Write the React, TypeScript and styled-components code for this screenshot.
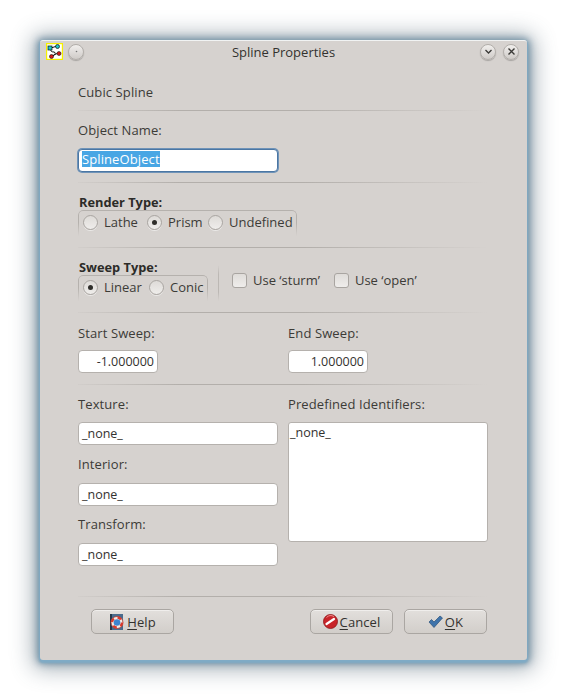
import styled, { createGlobalStyle } from "styled-components";

const GlobalStyle = createGlobalStyle`
    html, body {
        margin: 0;
        background: #fff;
    }
    body {
        font-family: "Open Sans", "Noto Sans", sans-serif;
        font-size: 13px;
        letter-spacing: 0.1px;
        color: #3c3b37;
    }
`;

const Page = styled.div`
    width: 566px;
    height: 700px;
    padding: 40px 0 0 40px;
    box-sizing: border-box;
    overflow: hidden;
`;

const Window = styled.div`
    width: 487px;
    height: 620px;
    box-sizing: border-box;
    background: #d6d2cf;
    border-top: 1px solid #f1f3f3;
    border-radius: 3px;
    box-shadow:
        0 2px 2px 1px #7fabc6,
        0 1px 7px 3px rgba(88, 125, 150, 0.72),
        0 2px 22px 7px rgba(70, 90, 105, 0.48);
`;

const TitleBar = styled.div`
    height: 21px;
    display: flex;
    align-items: center;
    padding: 0 8px 0 6px;
`;

const Title = styled.div`
    flex: 1;
    text-align: center;
    font-size: 13px;
    letter-spacing: 0;
    color: #33322f;
    padding-right: 6px;
`;

const TitleSide = styled.div<{ $w: number; $gap: number; $end?: boolean }>`
    width: ${(p) => p.$w}px;
    display: flex;
    align-items: center;
    justify-content: ${(p) => (p.$end ? "flex-end" : "flex-start")};
    gap: ${(p) => p.$gap}px;
`;

const RoundButton = styled.div`
    width: 16px;
    height: 16px;
    box-sizing: border-box;
    flex-shrink: 0;
    border-radius: 50%;
    background: linear-gradient(#f1efed, #cfcbc8);
    border: 1px solid #b2aeaa;
    box-shadow: 0 1px 1px rgba(0, 0, 0, 0.22);
    display: flex;
    align-items: center;
    justify-content: center;
`;

const Content = styled.div`
    padding: 20px 39px 0 38px;
`;

const Line = styled.div`
    height: 20px;
    line-height: 20px;
    white-space: nowrap;
`;

const Separator = styled.div<{ $top: number; $bottom: number }>`
    height: 1px;
    margin: ${(p) => p.$top}px 0 ${(p) => p.$bottom}px;
    background: linear-gradient(90deg, #d2cecb 0%, #b3afab 25%, #b3afab 55%, #d6d2cf 100%);
`;

const TextInput = styled.div<{ $w?: number; $focus?: boolean; $right?: boolean }>`
    width: ${(p) => p.$w ?? 200}px;
    height: 23px;
    line-height: 22px;
    box-sizing: border-box;
    background: #fff;
    border: 1px solid ${(p) => (p.$focus ? "#4b76a3" : "#b5b1ad")};
    box-shadow: ${(p) => (p.$focus ? "0 0 0 1px #6f93b8" : "none")};
    border-radius: 4px;
    padding: 0 3px;
    text-align: ${(p) => (p.$right ? "right" : "left")};
    color: #33322f;
    font-size: 12.5px;
    letter-spacing: 0;
`;

const Selected = styled.span`
    background: #48a6e4;
    color: #fff;
    display: inline-block;
    font-size: 13px;
    letter-spacing: 0.1px;
    line-height: 16px;
    vertical-align: 1px;
`;

const Bold = styled.div`
    height: 14px;
    line-height: 14px;
    font-weight: 700;
    font-size: 12.8px;
    letter-spacing: 0;
    color: #2c2b28;
    padding-left: 1px;
    white-space: nowrap;
`;

const Group = styled.div<{ $w: number }>`
    width: ${(p) => p.$w}px;
    height: 26px;
    margin-top: 1px;
    box-sizing: border-box;
    position: relative;
    display: flex;
    align-items: flex-start;
    padding: 4px 0 0 5px;
    /* the frame fades out towards the bottom, its content does not */
    &::before {
        content: "";
        position: absolute;
        inset: 0;
        border: 1px solid #b5b1ad;
        border-bottom: none;
        border-radius: 5px 5px 0 0;
        -webkit-mask-image: linear-gradient(#000 50%, transparent 100%);
        mask-image: linear-gradient(#000 50%, transparent 100%);
    }
`;

const Radio = styled.span<{ $on?: boolean }>`
    width: 15px;
    height: 15px;
    box-sizing: border-box;
    flex-shrink: 0;
    border-radius: 50%;
    background: linear-gradient(#dedbd8, #efedeb);
    border: 1px solid #a9a5a1;
    box-shadow: 0 1px 0 rgba(255, 255, 255, 0.5);
    display: flex;
    align-items: center;
    justify-content: center;
    &::after {
        content: "";
        width: 5px;
        height: 5px;
        border-radius: 50%;
        background: ${(p) => (p.$on ? "#2f2e2b" : "transparent")};
    }
`;

const RadioItem = styled.div<{ $w: number }>`
    width: ${(p) => p.$w}px;
    height: 16px;
    line-height: 16px;
    display: flex;
    align-items: center;
    gap: 6px;
    white-space: nowrap;
    flex-shrink: 0;
    letter-spacing: 0;
`;

const SweepRow = styled.div`
    display: flex;
`;

const SweepLeft = styled.div`
    width: 131px;
`;

const VerticalRule = styled.div`
    width: 1px;
    height: 36px;
    margin: 5px 0 0 9px;
    background: linear-gradient(#d6d2cf, #bcb8b4 25%, #bcb8b4 75%, #d6d2cf);
`;

const Checks = styled.div`
    display: flex;
    align-items: center;
    gap: 14px;
    padding-left: 13px;
    height: 40px;
    letter-spacing: 0;
`;

const CheckItem = styled.div`
    display: flex;
    align-items: center;
    gap: 6px;
    white-space: nowrap;
`;

const Checkbox = styled.span`
    width: 15px;
    height: 15px;
    box-sizing: border-box;
    border: 1px solid #a9a5a1;
    border-radius: 3px;
    background: linear-gradient(#dfdcd9, #efedeb);
`;

const TwoColumns = styled.div`
    display: grid;
    grid-template-columns: 210px 200px;
`;

const Column = styled.div`
    display: flex;
    flex-direction: column;
`;

const FieldGap = styled.div<{ $h: number }>`
    height: ${(p) => p.$h}px;
    flex-shrink: 0;
`;

const ListBox = styled.div`
    width: 200px;
    height: 120px;
    box-sizing: border-box;
    background: #fff;
    border: 1px solid #b5b1ad;
    border-radius: 3px;
    padding: 1px;
    line-height: 18px;
    font-size: 12.5px;
    letter-spacing: 0;
    color: #33322f;
`;

const ButtonRow = styled.div`
    display: flex;
    padding-left: 13px;
`;

const PushButton = styled.div<{ $w: number; $mr: number }>`
    width: ${(p) => p.$w}px;
    height: 25px;
    margin-right: ${(p) => p.$mr}px;
    box-sizing: border-box;
    border: 1px solid #aaa6a2;
    border-radius: 5px;
    background: linear-gradient(#e2dfdc, #d2ceca);
    box-shadow: inset 0 1px 0 #f0eeec;
    display: flex;
    align-items: center;
    justify-content: center;
    gap: 2px;
    color: #33322f;
    & u {
        text-underline-offset: 2px;
    }
`;

function AppIcon() {
    return (
        <svg width="17" height="17" viewBox="0 0 17 17">
            <rect x="0.5" y="0.5" width="16" height="16" fill="#fff" stroke="#f5f000" strokeWidth="1.4" />
            <path d="M5 5 L11 3 M5 6 Q4 9 8 9 Q11 10 7 13 M12 10 L6 13" fill="none" stroke="#111" strokeWidth="1" />
            <rect x="2" y="3" width="4" height="4" fill="#20c4c8" stroke="#111" strokeWidth="0.7" />
            <circle cx="11.5" cy="3.5" r="2" fill="#20c4c8" stroke="#111" strokeWidth="0.7" />
            <circle cx="13" cy="10.5" r="2" fill="#d21818" stroke="#111" strokeWidth="0.6" />
            <circle cx="5.5" cy="13.5" r="2" fill="#d21818" stroke="#111" strokeWidth="0.6" />
        </svg>
    );
}

function HelpIcon() {
    return (
        <svg width="16" height="16" viewBox="0 0 16 16">
            <rect x="1" y="0" width="13" height="16" fill="#4a6b8c" />
            <rect x="1" y="0" width="2" height="16" fill="#26384a" />
            <circle cx="8" cy="8.5" r="6" fill="#f4ede8" stroke="#b8392c" strokeWidth="0.8" />
            <circle cx="8" cy="8.5" r="5" fill="none" stroke="#d8392c" strokeWidth="2.4" strokeDasharray="3.9 3.95" />
            <circle cx="8" cy="8.5" r="3.3" fill="#3d84cf" />
        </svg>
    );
}

function CancelIcon() {
    return (
        <svg width="15" height="15" viewBox="0 0 15 15">
            <circle cx="7.5" cy="7.5" r="7" fill="#c8252a" stroke="#8e1518" strokeWidth="0.8" />
            <path d="M3.5 10 L11 5" stroke="#fff" strokeWidth="2.2" strokeLinecap="round" />
            <path d="M3.5 3.5 A6 6 0 0 1 11 2.6" fill="none" stroke="#ee8a8a" strokeWidth="1" />
        </svg>
    );
}

function OkIcon() {
    return (
        <svg width="15" height="14" viewBox="0 0 15 14">
            <path
                d="M1 7 L3.5 4.5 L6 7 L12 1 L14.5 3 L6 12.5 Z"
                fill="#3f74ab"
                stroke="#2b5078"
                strokeWidth="0.7"
                strokeLinejoin="round"
            />
        </svg>
    );
}

export default function App() {
    return (
        <Page>
            <GlobalStyle />
            <Window>
                <TitleBar>
                    <TitleSide $w={60} $gap={5}>
                        <AppIcon />
                        <RoundButton>
                            <svg width="3" height="3" viewBox="0 0 3 3">
                                <circle cx="1.5" cy="1.5" r="0.8" fill="#777" />
                            </svg>
                        </RoundButton>
                    </TitleSide>
                    <Title>Spline Properties</Title>
                    <TitleSide $w={52} $gap={7} $end>
                        <RoundButton>
                            <svg width="9" height="9" viewBox="0 0 9 9">
                                <path d="M1.5 3 L4.5 6 L7.5 3" fill="none" stroke="#3a3936" strokeWidth="1.3" />
                            </svg>
                        </RoundButton>
                        <RoundButton>
                            <svg width="9" height="9" viewBox="0 0 9 9">
                                <path d="M1.5 1.5 L7.5 7.5 M7.5 1.5 L1.5 7.5" stroke="#3a3936" strokeWidth="1.4" />
                            </svg>
                        </RoundButton>
                    </TitleSide>
                </TitleBar>
                <Content>
                    <Line>Cubic Spline</Line>
                    <Separator $top={8} $bottom={9} />
                    <Line>Object Name:</Line>
                    <FieldGap $h={9} />
                    <TextInput $focus>
                        <Selected>SplineObject</Selected>
                    </TextInput>
                    <Separator $top={10} $bottom={12} />
                    <Bold>Render Type:</Bold>
                    <Group $w={219}>
                        <RadioItem $w={64}>
                            <Radio />
                            Lathe
                        </RadioItem>
                        <RadioItem $w={61}>
                            <Radio $on />
                            Prism
                        </RadioItem>
                        <RadioItem $w={85}>
                            <Radio />
                            Undefined
                        </RadioItem>
                    </Group>
                    <Separator $top={11} $bottom={12} />
                    <SweepRow>
                        <SweepLeft>
                            <Bold>Sweep Type:</Bold>
                            <Group $w={130}>
                                <RadioItem $w={66}>
                                    <Radio $on />
                                    Linear
                                </RadioItem>
                                <RadioItem $w={56}>
                                    <Radio />
                                    Conic
                                </RadioItem>
                            </Group>
                        </SweepLeft>
                        <VerticalRule />
                        <Checks>
                            <CheckItem>
                                <Checkbox />
                                Use ‘sturm’
                            </CheckItem>
                            <CheckItem>
                                <Checkbox />
                                Use ‘open’
                            </CheckItem>
                        </Checks>
                    </SweepRow>
                    <Separator $top={11} $bottom={10} />
                    <TwoColumns>
                        <Column>
                            <Line>Start Sweep:</Line>
                            <FieldGap $h={7} />
                            <TextInput $w={80} $right>
                                -1.000000
                            </TextInput>
                        </Column>
                        <Column>
                            <Line>End Sweep:</Line>
                            <FieldGap $h={7} />
                            <TextInput $w={80} $right>
                                1.000000
                            </TextInput>
                        </Column>
                    </TwoColumns>
                    <Separator $top={11} $bottom={9} />
                    <TwoColumns>
                        <Column>
                            <Line>Texture:</Line>
                            <FieldGap $h={8} />
                            <TextInput>_none_</TextInput>
                            <FieldGap $h={9} />
                            <Line>Interior:</Line>
                            <FieldGap $h={9} />
                            <TextInput>_none_</TextInput>
                            <FieldGap $h={8} />
                            <Line>Transform:</Line>
                            <FieldGap $h={9} />
                            <TextInput>_none_</TextInput>
                        </Column>
                        <Column>
                            <Line>Predefined Identifiers:</Line>
                            <FieldGap $h={8} />
                            <ListBox>_none_</ListBox>
                        </Column>
                    </TwoColumns>
                    <Separator $top={30} $bottom={12} />
                    <ButtonRow>
                        <PushButton $w={83} $mr={136}>
                            <HelpIcon />
                            <span>
                                <u>H</u>elp
                            </span>
                        </PushButton>
                        <PushButton $w={83} $mr={11}>
                            <CancelIcon />
                            <span>
                                <u>C</u>ancel
                            </span>
                        </PushButton>
                        <PushButton $w={83} $mr={0}>
                            <OkIcon />
                            <span>
                                <u>O</u>K
                            </span>
                        </PushButton>
                    </ButtonRow>
                </Content>
            </Window>
        </Page>
    );
}
